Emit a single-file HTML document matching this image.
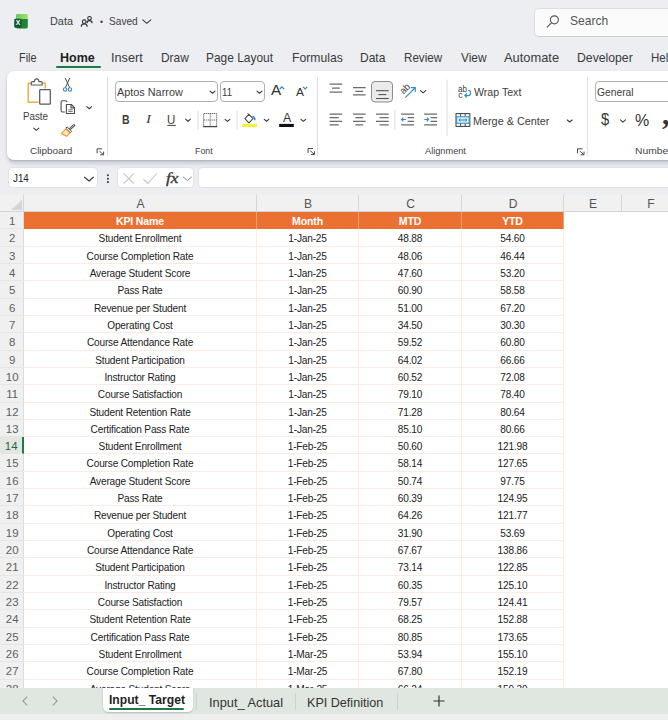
<!DOCTYPE html>
<html><head><meta charset="utf-8"><title>Data - Excel</title>
<style>
*{box-sizing:border-box;margin:0;padding:0}
html,body{width:668px;height:720px;overflow:hidden;background:#eceef2;font-family:"Liberation Sans",sans-serif;color:#242424}
.abs{position:absolute}
#app{position:relative;width:668px;height:720px;overflow:hidden;background:#eceef2}
/* title */
#title .t{position:absolute;top:14px;font-size:11.2px;color:#404040;line-height:16px;white-space:nowrap}
#search{position:absolute;left:533.5px;top:7.5px;width:145px;height:29px;background:#fbfbfc;border:1px solid #dcdee3;border-bottom-color:#c9ccd3;border-radius:5px}
#search span{position:absolute;left:36px;top:5px;font-size:12.2px;color:#555;line-height:16px}
/* tabs */
#tabs span{position:absolute;top:50px;font-size:12.2px;line-height:16px;color:#3a3a3a;white-space:nowrap}
#tabs .home{font-weight:bold;color:#1f1f1f}
#tabs u{position:absolute;left:56px;top:66px;width:45px;height:2px;background:#1c7a45;border-radius:1px}
/* ribbon */
#ribbon{position:absolute;left:7px;top:71.3px;width:680px;height:88.7px;background:#fff;border-radius:7px;box-shadow:0 1px 2px rgba(0,0,0,.12),0 3px 5px rgba(40,50,80,.13)}
#ribbon .lbl{position:absolute;top:73px;font-size:9.3px;line-height:12px;color:#444;white-space:nowrap}
#ribbon .sep{position:absolute;top:8px;width:1px;height:68px;background:#e1e1e1}
#ribbon .txt{position:absolute;font-size:10.9px;line-height:14px;color:#3d3d3d;white-space:nowrap}
.combo{position:absolute;height:21px;border:1px solid #b0b0b0;border-radius:4px;background:#fff}
/* formula bar */
#fbar .box{position:absolute;top:167.4px;height:20.8px;background:#fff;border-radius:4px;border:1px solid #e1e2e6}
/* grid */
#grid{position:absolute;left:0;top:195px;width:668px;height:493px;background:#fff;overflow:hidden}
#colhdr{position:absolute;left:0;top:0;width:668px;height:17px;background:#f1f1f1;border-bottom:1px solid #d4d4d4}
#colhdr span{position:absolute;top:0;height:17px;font-size:13px;line-height:17.6px;text-align:center;color:#555;transform:scaleX(.93)}
#colhdr i{position:absolute;top:0;width:1px;height:17px;background:#d6d6d6}
#rowhdr{position:absolute;left:0;top:17px;width:24px;height:480px;background:#f0f0f0;border-right:1px solid #dcdcdc}
.r{position:absolute;left:0;width:668px;height:17.32px}
.r i{position:absolute;left:0;top:0;width:24px;height:100%;font-style:normal;font-size:11.4px;line-height:19.2px;text-align:center;color:#606060;padding-left:.4px;border-bottom:1px solid #e6e6e6}
.r b{position:absolute;top:0;height:100%;font-weight:normal;font-size:10.1px;line-height:19.4px;text-align:center;color:#222;border-right:1px solid #fbebe1;border-bottom:1px solid #fbebe1;white-space:nowrap;letter-spacing:-0.17px}
.r .a{left:24px;width:233px}
.r .b{left:257px;width:102px}
.r .c{left:359px;width:103px}
.r .d{left:462px;width:102px}
.r.hd b{background:#ea7132;color:#fff;font-weight:bold;border-right:1px solid #f3a070;border-bottom:none;font-size:10.6px;line-height:18.4px}
.r.sel i{color:#1c6b3e;background:#e3e7e4;border-right:2px solid #1c7a45}
/* sheet tabs */
#sheets{position:absolute;left:0;top:687.7px;width:668px;height:26.2px;background:#e0e7e1}
#bottom{position:absolute;left:0;top:713.9px;width:668px;height:7px;background:#eeeeee}
#sheets span{position:absolute;font-size:12.6px;line-height:16px;color:#333;white-space:nowrap}
</style></head><body>
<div id="app">
<div id="title">
<svg class="abs" style="left:12px;top:12px" width="20" height="20" viewBox="12 12 20 20"><defs><linearGradient id="xg" x1="0" x2="1" y1="0" y2="0"><stop offset="0" stop-color="#62c95c"/><stop offset="1" stop-color="#a6e06c"/></linearGradient></defs><path d="M16 15.500c0-.8.600-1.400 1.400-1.400h9c.8 0 1.400.6 1.400 1.400V19.500H16z" fill="url(#xg)"/><path d="M16 19h11.800v8c0 .8-.6 1.400-1.400 1.400h-9c-.8 0-1.400-.6-1.400-1.400z" fill="#23813b"/><rect x="14.200" y="18.800" width="7.400" height="9" rx="1.300" fill="#0e5a2c"/><text x="17.900" y="25.300" font-size="6.800" font-weight="bold" fill="#fff" text-anchor="middle" font-family="Liberation Sans, sans-serif">X</text></svg>
<span class="t" id="t1" style="transform-origin:0 0;transform:scaleX(0.972);margin-left:-1.0px;margin-top:-0.6px;left:51px">Data</span>
<span class="t" id="t2" style="transform-origin:0 0;transform:scaleX(0.981);margin-left:1.1px;margin-top:-0.2px;left:99px;font-size:8.600px">•</span><span class="t" id="t3" style="transform-origin:0 0;transform:scaleX(0.906);margin-left:1.0px;margin-top:-0.6px;left:108px">Saved</span>
<div id="search"><span id="t4" style="transform-origin:0 0;transform:scaleX(0.989);margin-left:-0.5px;margin-top:-0.9px;">Search</span></div>
</div>
<div id="tabs">
<span id="t5" style="transform-origin:0 0;transform:scaleX(0.898);margin-left:-0.3px;margin-top:0.1px;left:19px">File</span><span class="home" id="t6" style="transform-origin:0 0;transform:scaleX(1.026);margin-left:0.2px;margin-top:0.1px;left:60px">Home</span><span id="t7" style="transform-origin:0 0;transform:scaleX(1.039);margin-left:-0.2px;margin-top:0.1px;left:111px">Insert</span><span id="t8" style="transform-origin:0 0;transform:scaleX(0.978);margin-left:0.6px;margin-top:0.1px;left:160px">Draw</span><span id="t9" style="transform-origin:0 0;transform:scaleX(0.979);margin-left:-0.6px;margin-top:0.1px;left:207px">Page Layout</span><span id="t10" style="transform-origin:0 0;transform:scaleX(0.999);margin-left:0.0px;margin-top:0.1px;left:292px">Formulas</span><span id="t11" style="transform-origin:0 0;transform:scaleX(0.984);margin-left:-0.2px;margin-top:0.1px;left:360px">Data</span><span id="t12" style="transform-origin:0 0;transform:scaleX(0.953);margin-left:-0.1px;margin-top:0.1px;left:404px">Review</span><span id="t13" style="transform-origin:0 0;transform:scaleX(0.975);margin-left:1.2px;margin-top:0.1px;left:460px">View</span><span id="t14" style="transform-origin:0 0;transform:scaleX(1.056);margin-left:0.1px;margin-top:0.1px;left:504px">Automate</span><span id="t15" style="transform-origin:0 0;transform:scaleX(1.003);margin-left:-0.4px;margin-top:0.1px;left:577px">Developer</span><span id="t16" style="transform-origin:0 0;transform:scaleX(0.944);margin-left:1.0px;margin-top:0.1px;left:650px">Help</span>
<u></u>
</div>
<div id="rshadow" style="position:absolute;left:9px;top:158px;width:670px;height:9px;background:linear-gradient(#d3d6dd,#e2e4e9 50%,#eceef2);border-radius:0 0 0 8px"></div>
<div id="ribbon">
<div id="rin" style="position:absolute;left:0;top:.7px">
<span class="txt" id="t17" style="transform-origin:0 0;transform:scaleX(0.898);margin-left:-1.1px;margin-top:0.0px;left:17.500px;top:37px">Paste</span>
<span class="lbl" id="t18" style="transform-origin:0 0;transform:scaleX(1.063);margin-left:0.0px;margin-top:0.1px;left:23px">Clipboard</span>
<div class="combo" style="left:108px;top:9.500px;width:102.500px"></div><span class="txt" id="t19" style="transform-origin:0 0;transform:scaleX(0.997);margin-left:-0.0px;margin-top:0.0px;left:110px;top:13px">Aptos Narrow</span>
<div class="combo" style="left:213px;top:9.500px;width:45px"></div><span class="txt" id="t20" style="transform-origin:0 0;transform:scaleX(0.889);margin-left:-1.0px;margin-top:0.0px;left:216px;top:13px">11</span>
<span class="txt" id="t21" style="transform-origin:0 0;transform:scaleX(1.051);margin-left:1.2px;margin-top:-0.8px;left:263px;top:10px;font-size:14.500px;line-height:18px;color:#333">A</span>
<span class="txt" id="t22" style="transform-origin:0 0;transform:scaleX(1.069);margin-left:1.7px;margin-top:-0.3px;left:287px;top:12px;font-size:11.200px;line-height:16px;color:#333">A</span>
<span class="txt" id="t23" style="transform-origin:0 0;transform:scaleX(0.876);margin-left:0.7px;margin-top:1.0px;left:114px;top:40px;font-weight:bold;font-size:12px">B</span>
<span class="txt" id="t24" style="transform-origin:0 0;transform:scaleX(1.104);margin-left:0.6px;margin-top:0.2px;left:138.300px;top:40px;font-style:italic;font-size:13.500px;font-family:'Liberation Serif',serif">I</span>
<span class="txt" id="t25" style="transform-origin:0 0;transform:scaleX(0.957);margin-left:0.4px;margin-top:1.3px;left:159.500px;top:40px;font-size:12px">U</span>
<span class="txt" id="t26" style="transform-origin:0 0;transform:scaleX(1.021);margin-left:1.6px;margin-top:2.4px;left:274px;top:36px;font-size:12px;line-height:16px;color:#333">A</span>
<span class="lbl" id="t27" style="transform-origin:0 0;transform:scaleX(0.947);margin-left:-1.0px;margin-top:-0.4px;left:188.500px">Font</span>
<span class="txt" id="t28" style="transform-origin:0 0;transform:scaleX(0.974);margin-left:-0.5px;margin-top:0.0px;left:467.500px;top:13px">Wrap Text</span>
<span class="txt" id="t29" style="transform-origin:0 0;transform:scaleX(0.993);margin-left:-1.3px;margin-top:-0.3px;left:467.500px;top:42px">Merge &amp; Center</span>
<span class="lbl" id="t30" style="transform-origin:0 0;transform:scaleX(0.990);margin-left:0.5px;margin-top:0.2px;left:417px">Alignment</span>
<div class="combo" style="left:588px;top:9.500px;width:100px"></div><span class="txt" id="t31" style="transform-origin:0 0;transform:scaleX(0.945);margin-left:0.2px;margin-top:0.3px;left:590px;top:13px">General</span>
<span class="txt" id="t32" style="transform-origin:0 0;transform:scaleX(0.921);margin-left:0.3px;margin-top:0.0px;left:594px;top:38px;font-size:16px;line-height:20px;color:#333">$</span>
<span class="txt" id="t33" style="transform-origin:0 0;transform:scaleX(1.001);margin-left:0.4px;margin-top:1.4px;left:628px;top:38px;font-size:16px;line-height:20px;color:#333">%</span>
<span class="txt" style="left:655px;top:30px;font-size:30px;line-height:24px;color:#333;font-weight:bold;font-family:'Liberation Serif',serif">,</span>
<span class="lbl" id="t34" style="transform-origin:0 0;transform:scaleX(1.112);margin-left:-0.2px;margin-top:0.1px;left:628px">Number</span>
</div>

</div>
<div id="fbar">
<div class="box" style="left:7.500px;width:90.200px"></div>
<span class="abs" id="t35" style="transform-origin:0 0;transform:scaleX(0.907);margin-left:0.1px;margin-top:0.1px;left:13px;top:171px;font-size:10.800px;line-height:15px;color:#222">J14</span>
<div class="box" style="left:116.900px;width:76.800px"></div>
<span class="abs" id="t36" style="transform-origin:0 0;transform:scaleX(1.190);margin-left:0.8px;margin-top:0.4px;left:165px;top:169px;font-size:14.500px;line-height:18px;color:#333;font-style:italic;-webkit-text-stroke:.3px #333;font-family:'Liberation Serif',serif">fx</span>
<div class="box" style="left:197.800px;width:480px"></div>

</div>
<div id="grid">
<div id="colhdr"><span style="left:24px;width:233px">A</span><span style="left:257px;width:102px">B</span><span style="left:359px;width:103px">C</span><span style="left:462px;width:102px">D</span><span style="left:564px;width:58px">E</span><span style="left:622px;width:58px">F</span>
<i style="left:23px"></i><i style="left:256px"></i><i style="left:358px"></i><i style="left:461px"></i><i style="left:563px"></i><i style="left:621px"></i>
<svg class="abs" style="left:11px;top:5px" width="11" height="10" viewBox="0 0 11 10"><path d="M11 0V10H0Z" fill="#d5d5d5"/></svg></div>
<div id="rowhdr"></div>
<div id="rows">
<div style="top:17.00px" class="r hd"><i>1</i><b class="a">KPI Name</b><b class="b">Month</b><b class="c">MTD</b><b class="d">YTD</b></div>
<div style="top:34.32px" class="r"><i>2</i><b class="a">Student Enrollment</b><b class="b">1-Jan-25</b><b class="c">48.88</b><b class="d">54.60</b></div>
<div style="top:51.64px" class="r"><i>3</i><b class="a">Course Completion Rate</b><b class="b">1-Jan-25</b><b class="c">48.06</b><b class="d">46.44</b></div>
<div style="top:68.96px" class="r"><i>4</i><b class="a">Average Student Score</b><b class="b">1-Jan-25</b><b class="c">47.60</b><b class="d">53.20</b></div>
<div style="top:86.28px" class="r"><i>5</i><b class="a">Pass Rate</b><b class="b">1-Jan-25</b><b class="c">60.90</b><b class="d">58.58</b></div>
<div style="top:103.60px" class="r"><i>6</i><b class="a">Revenue per Student</b><b class="b">1-Jan-25</b><b class="c">51.00</b><b class="d">67.20</b></div>
<div style="top:120.92px" class="r"><i>7</i><b class="a">Operating Cost</b><b class="b">1-Jan-25</b><b class="c">34.50</b><b class="d">30.30</b></div>
<div style="top:138.24px" class="r"><i>8</i><b class="a">Course Attendance Rate</b><b class="b">1-Jan-25</b><b class="c">59.52</b><b class="d">60.80</b></div>
<div style="top:155.56px" class="r"><i>9</i><b class="a">Student Participation</b><b class="b">1-Jan-25</b><b class="c">64.02</b><b class="d">66.66</b></div>
<div style="top:172.88px" class="r"><i>10</i><b class="a">Instructor Rating</b><b class="b">1-Jan-25</b><b class="c">60.52</b><b class="d">72.08</b></div>
<div style="top:190.20px" class="r"><i>11</i><b class="a">Course Satisfaction</b><b class="b">1-Jan-25</b><b class="c">79.10</b><b class="d">78.40</b></div>
<div style="top:207.52px" class="r"><i>12</i><b class="a">Student Retention Rate</b><b class="b">1-Jan-25</b><b class="c">71.28</b><b class="d">80.64</b></div>
<div style="top:224.84px" class="r"><i>13</i><b class="a">Certification Pass Rate</b><b class="b">1-Jan-25</b><b class="c">85.10</b><b class="d">80.66</b></div>
<div style="top:242.16px" class="r sel"><i>14</i><b class="a">Student Enrollment</b><b class="b">1-Feb-25</b><b class="c">50.60</b><b class="d">121.98</b></div>
<div style="top:259.48px" class="r"><i>15</i><b class="a">Course Completion Rate</b><b class="b">1-Feb-25</b><b class="c">58.14</b><b class="d">127.65</b></div>
<div style="top:276.80px" class="r"><i>16</i><b class="a">Average Student Score</b><b class="b">1-Feb-25</b><b class="c">50.74</b><b class="d">97.75</b></div>
<div style="top:294.12px" class="r"><i>17</i><b class="a">Pass Rate</b><b class="b">1-Feb-25</b><b class="c">60.39</b><b class="d">124.95</b></div>
<div style="top:311.44px" class="r"><i>18</i><b class="a">Revenue per Student</b><b class="b">1-Feb-25</b><b class="c">64.26</b><b class="d">121.77</b></div>
<div style="top:328.76px" class="r"><i>19</i><b class="a">Operating Cost</b><b class="b">1-Feb-25</b><b class="c">31.90</b><b class="d">53.69</b></div>
<div style="top:346.08px" class="r"><i>20</i><b class="a">Course Attendance Rate</b><b class="b">1-Feb-25</b><b class="c">67.67</b><b class="d">138.86</b></div>
<div style="top:363.40px" class="r"><i>21</i><b class="a">Student Participation</b><b class="b">1-Feb-25</b><b class="c">73.14</b><b class="d">122.85</b></div>
<div style="top:380.72px" class="r"><i>22</i><b class="a">Instructor Rating</b><b class="b">1-Feb-25</b><b class="c">60.35</b><b class="d">125.10</b></div>
<div style="top:398.04px" class="r"><i>23</i><b class="a">Course Satisfaction</b><b class="b">1-Feb-25</b><b class="c">79.57</b><b class="d">124.41</b></div>
<div style="top:415.36px" class="r"><i>24</i><b class="a">Student Retention Rate</b><b class="b">1-Feb-25</b><b class="c">68.25</b><b class="d">152.88</b></div>
<div style="top:432.68px" class="r"><i>25</i><b class="a">Certification Pass Rate</b><b class="b">1-Feb-25</b><b class="c">80.85</b><b class="d">173.65</b></div>
<div style="top:450.00px" class="r"><i>26</i><b class="a">Student Enrollment</b><b class="b">1-Mar-25</b><b class="c">53.94</b><b class="d">155.10</b></div>
<div style="top:467.32px" class="r"><i>27</i><b class="a">Course Completion Rate</b><b class="b">1-Mar-25</b><b class="c">67.80</b><b class="d">152.19</b></div>
<div style="top:484.64px" class="r"><i>28</i><b class="a">Average Student Score</b><b class="b">1-Mar-25</b><b class="c">66.24</b><b class="d">159.30</b></div>
</div>
</div>
<div id="sheets">
<svg class="abs" style="left:22px;top:8px" width="6" height="10" viewBox="0 0 6 10" fill="none" stroke="#9a9a9a" stroke-width="1.100"><path d="M5.200.7L.9 5l4.300 4.300"/></svg>
<svg class="abs" style="left:52px;top:8px" width="6" height="10" viewBox="0 0 6 10" fill="none" stroke="#9a9a9a" stroke-width="1.100"><path d="M.8.700L5.100 5 .8 9.300"/></svg>
<div class="abs" style="left:102.500px;top:0;width:90px;height:24.200px;background:#fff;border-radius:0 0 5px 5px;box-shadow:0 1px 2px rgba(0,0,0,.2)"></div>
<span id="t37" style="transform-origin:0 0;transform:scaleX(0.964);margin-left:-0.3px;margin-top:1.0px;left:109px;top:3.500px;font-weight:bold;color:#1f1f1f">Input_ Target</span>
<i class="abs" style="left:109px;top:20.300px;width:75.400px;height:2.200px;background:#1c7a45;border-radius:1px"></i>
<i class="abs" style="left:196px;top:5px;width:1px;height:17px;background:#ccd3cd"></i>
<span id="t38" style="transform-origin:0 0;transform:scaleX(1.017);margin-left:-0.3px;margin-top:1.0px;left:209px;top:6px">Input_ Actual</span>
<i class="abs" style="left:295px;top:5px;width:1px;height:17px;background:#ccd3cd"></i>
<span id="t39" style="transform-origin:0 0;transform:scaleX(0.999);margin-left:-0.5px;margin-top:1.0px;left:307.500px;top:6px">KPI Definition</span>
<i class="abs" style="left:396.500px;top:5px;width:1px;height:17px;background:#ccd3cd"></i>
<svg class="abs" style="left:433px;top:7px" width="12" height="12" viewBox="0 0 12 12" stroke="#333" stroke-width="1.200"><path d="M6 .5v11M.5 6h11"/></svg>

</div>
<div id="bottom"></div>
<svg class="abs" style="left:0;top:0;z-index:3" width="668" height="720" viewBox="0 0 668 720">
<g fill="none" stroke="#333" stroke-width="1.150"><circle cx="89.500" cy="18.300" r="1.800"/><path d="M87 23.200c0-1.700 1.100-2.600 2.500-2.600s2.600.9 2.600 2.600"/><circle cx="84.200" cy="21.700" r="1.800"/><path d="M81.200 26.800c0-2 1.300-3 3-3s3 1 3 3"/></g>
<path d="M142.80 19.90l4.00 3.40l4.00 -3.40" stroke="#3a3a3a" stroke-width="1.1" fill="none" stroke-linecap="round" stroke-linejoin="round"/>
<g fill="none" stroke="#555" stroke-width="1.150"><circle cx="554.400" cy="19.800" r="4"/><path d="M551.500 22.800L546.800 27.400"/></g>
<g fill="none" stroke-linejoin="round"><path d="M31 83.300H28.200V102.200H38.600M42.500 83.300H45.300V88.400" stroke="#eeae4c" stroke-width="1.450"/><path d="M31.300 85V82.600c0-.6.400-1 1-1h2.200c.1-1.600 1-2.700 2.200-2.700s2.100 1.100 2.200 2.700h2.200c.6 0 1 .4 1 1V85z" stroke="#5a5a5a" stroke-width="1.150" fill="#fff"/><rect x="39.700" y="89.600" width="10.600" height="14.600" rx=".8" fill="#fff" stroke="#5a5a5a" stroke-width="1.250"/></g>
<path d="M33.70 128.09l2.60 2.21l2.60 -2.21" stroke="#3a3a3a" stroke-width="1.1" fill="none" stroke-linecap="round" stroke-linejoin="round"/>
<g fill="none"><path d="M65.200 78L69.600 87.600M69.800 78L65.400 87.600" stroke="#4a4a4a" stroke-width="1"/><circle cx="65.100" cy="89.500" r="1.700" stroke="#3b86c6" stroke-width="1.100"/><circle cx="69.900" cy="89.500" r="1.700" stroke="#3b86c6" stroke-width="1.100"/></g>
<g fill="none" stroke="#4d4d4d" stroke-width="1.100" stroke-linejoin="round"><path d="M64.800 112H62.300c-.7 0-1.200-.5-1.200-1.200V102c0-.7.500-1.200 1.200-1.200H66l1.200 1.100"/><path d="M66.400 104.500h4.900l3.200 3.200v5.800h-8.100z" fill="#fff"/><path d="M71 104.700v3.200h3.300"/><path d="M68.200 109.800h4.500M68.200 111.600h4.500" stroke-width=".8"/></g>
<path d="M86.80 106.68l2.40 2.04l2.40 -2.04" stroke="#3a3a3a" stroke-width="1.1" fill="none" stroke-linecap="round" stroke-linejoin="round"/>
<g fill="none" stroke-linejoin="round" stroke-linecap="round"><path d="M74 125.300l-3.600 3.400" stroke="#4a4a4a" stroke-width="2.400"/><path d="M74 125.300l-3.400 3.200" stroke="#fff" stroke-width=".7"/><path d="M67.400 127.200l4.300 4.200-1.300 1.300-4.300-4.200z" stroke="#4a4a4a" stroke-width="1" fill="#fff"/><path d="M65.700 128.900l4.200 4.200-3.200 3.200-5.300-2.700z" stroke="#e9a23b" stroke-width="1.200" fill="#fbe6c2"/></g>
<g transform="translate(96.6,148.3)" stroke="#4a4a4a" stroke-width="1" fill="none"><path d="M.5 5V.5H5.500"/><path d="M2.800 2.800L6.800 6.300M7 3.300V6.500H3.600"/></g>
<path d="M107.5 77V156" stroke="#dedede" stroke-width="1"/>
<path d="M210.00 91.14l2.50 2.12l2.50 -2.12" stroke="#3a3a3a" stroke-width="1.1" fill="none" stroke-linecap="round" stroke-linejoin="round"/>
<path d="M257.00 91.14l2.50 2.12l2.50 -2.12" stroke="#3a3a3a" stroke-width="1.1" fill="none" stroke-linecap="round" stroke-linejoin="round"/>
<path d="M279.800 89l2.100-2.200 2.100 2.200" stroke="#3b86c6" stroke-width="1.200" fill="none"/>
<path d="M303 86.800l2.100 2.200 2.100-2.200" stroke="#3b86c6" stroke-width="1.200" fill="none"/>
<path d="M167.300 125.400H175.800" stroke="#444" stroke-width="1"/>
<path d="M185.60 119.18l2.40 2.04l2.40 -2.04" stroke="#3a3a3a" stroke-width="1.1" fill="none" stroke-linecap="round" stroke-linejoin="round"/>
<path d="M198 111V129.5" stroke="#dedede" stroke-width="1"/>
<g fill="none"><rect x="203.700" y="113.500" width="13" height="13" stroke="#555" stroke-width="1" stroke-dasharray="1.200 .8"/><path d="M210.200 113.500v13M203.700 120h13" stroke="#666" stroke-width="1" stroke-dasharray="1.200 .8"/><path d="M203.200 126.600h14" stroke="#444" stroke-width="1.300"/></g>
<path d="M225.10 119.38l2.40 2.04l2.40 -2.04" stroke="#3a3a3a" stroke-width="1.1" fill="none" stroke-linecap="round" stroke-linejoin="round"/>
<path d="M237 111V129.5" stroke="#dedede" stroke-width="1"/>
<g fill="none" stroke-linejoin="round"><path d="M248.800 114.400l4.300 4.300-4.100 4.100-4.100-4.100z" stroke="#4a4a4a" stroke-width="1.100" fill="#fff"/><path d="M247.600 113.200l1.600 1.600" stroke="#4a4a4a" stroke-width="1"/><path d="M252.400 116c1.800.6 2.700 2 2.500 4.200" stroke="#2f7fc1" stroke-width="1.300"/><rect x="242.300" y="123.900" width="14.800" height="3.100" fill="#f8ee3a" stroke="none"/></g>
<path d="M264.30 119.34l2.25 1.91l2.25 -1.91" stroke="#3a3a3a" stroke-width="1.1" fill="none" stroke-linecap="round" stroke-linejoin="round"/>
<rect x="279.200" y="123.900" width="14.600" height="3.100" fill="#111"/>
<path d="M301.00 119.30l2.35 2.00l2.35 -2.00" stroke="#3a3a3a" stroke-width="1.1" fill="none" stroke-linecap="round" stroke-linejoin="round"/>
<g transform="translate(307.5,148)" stroke="#4a4a4a" stroke-width="1" fill="none"><path d="M.5 5V.5H5.500"/><path d="M2.800 2.800L6.800 6.300M7 3.300V6.500H3.600"/></g>
<path d="M317.5 77V156" stroke="#dedede" stroke-width="1"/>
<path d="M329.60 84.10H342.20" stroke="#4d4d4d" stroke-width="1.05"/>
<path d="M331.99 88.10H339.81" stroke="#4d4d4d" stroke-width="1.05"/>
<path d="M329.60 92.10H342.20" stroke="#4d4d4d" stroke-width="1.05"/>
<path d="M353.00 87.70H365.60" stroke="#4d4d4d" stroke-width="1.05"/>
<path d="M355.39 91.30H363.21" stroke="#4d4d4d" stroke-width="1.05"/>
<path d="M353.00 94.90H365.60" stroke="#4d4d4d" stroke-width="1.05"/>
<rect x="371.500" y="81.500" width="21" height="20.500" rx="3.500" fill="#ebebeb" stroke="#8d8d8d" stroke-width="1"/>
<path d="M376.00 90.70H388.70" stroke="#4d4d4d" stroke-width="1.05"/>
<path d="M378.41 94.60H386.29" stroke="#4d4d4d" stroke-width="1.05"/>
<path d="M376.00 98.50H388.70" stroke="#4d4d4d" stroke-width="1.05"/>
<text transform="translate(403.400,94.600) rotate(-45)" font-size="9.400" fill="#3a3a3a" font-family="Liberation Sans, sans-serif">ab</text>
<path d="M405.200 97.600L415 88M410.800 87.600H415.300V92" stroke="#2f8fc4" stroke-width="1.100" fill="none"/>
<path d="M420.50 90.59l2.60 2.21l2.60 -2.21" stroke="#3a3a3a" stroke-width="1.1" fill="none" stroke-linecap="round" stroke-linejoin="round"/>
<path d="M329.60 114.10H342.20" stroke="#4d4d4d" stroke-width="1.05"/>
<path d="M329.60 117.70H338.67" stroke="#4d4d4d" stroke-width="1.05"/>
<path d="M329.60 121.30H342.20" stroke="#4d4d4d" stroke-width="1.05"/>
<path d="M329.60 124.90H338.67" stroke="#4d4d4d" stroke-width="1.05"/>
<path d="M353.00 114.10H365.60" stroke="#4d4d4d" stroke-width="1.05"/>
<path d="M355.39 117.70H363.21" stroke="#4d4d4d" stroke-width="1.05"/>
<path d="M353.00 121.30H365.60" stroke="#4d4d4d" stroke-width="1.05"/>
<path d="M355.39 124.90H363.21" stroke="#4d4d4d" stroke-width="1.05"/>
<path d="M376.00 114.10H388.70" stroke="#4d4d4d" stroke-width="1.05"/>
<path d="M379.56 117.70H388.70" stroke="#4d4d4d" stroke-width="1.05"/>
<path d="M376.00 121.30H388.70" stroke="#4d4d4d" stroke-width="1.05"/>
<path d="M379.56 124.90H388.70" stroke="#4d4d4d" stroke-width="1.05"/>
<path d="M394.8 109.5V130" stroke="#dedede" stroke-width="1"/>
<path d="M401.10 114.10H414.10" stroke="#4d4d4d" stroke-width="1.05"/>
<path d="M407.60 117.70H414.10" stroke="#4d4d4d" stroke-width="1.05"/>
<path d="M407.60 121.30H414.10" stroke="#4d4d4d" stroke-width="1.05"/>
<path d="M401.10 124.90H414.10" stroke="#4d4d4d" stroke-width="1.05"/>
<path d="M405.90 119.50H401.60M403.40 117.60l-1.900 1.900 1.900 1.900" stroke="#2f8fc4" stroke-width="1.100" fill="none"/>
<path d="M424.10 114.10H437.10" stroke="#4d4d4d" stroke-width="1.05"/>
<path d="M430.60 117.70H437.10" stroke="#4d4d4d" stroke-width="1.05"/>
<path d="M430.60 121.30H437.10" stroke="#4d4d4d" stroke-width="1.05"/>
<path d="M424.10 124.90H437.10" stroke="#4d4d4d" stroke-width="1.05"/>
<path d="M424.30 119.50H428.60M426.80 117.60l1.900 1.900-1.900 1.900" stroke="#2f8fc4" stroke-width="1.100" fill="none"/>
<path d="M447 79.5V136" stroke="#dedede" stroke-width="1"/>
<text x="458" y="91.700" font-size="8.600" fill="#3a3a3a" font-family="Liberation Sans, sans-serif" textLength="9" lengthAdjust="spacingAndGlyphs">ab</text>
<text x="458.200" y="98.300" font-size="8.600" fill="#3a3a3a" font-family="Liberation Sans, sans-serif">c</text>
<path d="M468 90.200c3.400 0 3.400 5.400 0 5.400H465M466.900 93.500L464.800 95.600l2.100 2.100" stroke="#2f8fc4" stroke-width="1.100" fill="none"/>
<g fill="none"><rect x="456" y="113.600" width="13.800" height="12.800" stroke="#4a4a4a" stroke-width="1.100"/><path d="M460.600 113.800v2.800M465.200 113.800v2.800M460.600 123.400v2.800M465.200 123.400v2.800" stroke="#4a4a4a" stroke-width="1"/><rect x="456.600" y="116.700" width="12.600" height="6.600" fill="#d5e8f6" stroke="#2f8fc4" stroke-width="1"/><path d="M459 120h7.800M460.400 118.600L459 120l1.400 1.400M465.400 118.600l1.400 1.400-1.400 1.400" stroke="#2f8fc4" stroke-width="1"/></g>
<path d="M567.30 119.98l2.40 2.04l2.40 -2.04" stroke="#3a3a3a" stroke-width="1.1" fill="none" stroke-linecap="round" stroke-linejoin="round"/>
<g transform="translate(577,148.3)" stroke="#4a4a4a" stroke-width="1" fill="none"><path d="M.5 5V.5H5.500"/><path d="M2.800 2.800L6.800 6.300M7 3.300V6.500H3.600"/></g>
<path d="M587.4 77V156" stroke="#dedede" stroke-width="1"/>
<path d="M620.40 119.94l2.50 2.12l2.50 -2.12" stroke="#3a3a3a" stroke-width="1.1" fill="none" stroke-linecap="round" stroke-linejoin="round"/>
<path d="M84.60 177.23l4.40 3.74l4.40 -3.74" stroke="#3a3a3a" stroke-width="1.15" fill="none" stroke-linecap="round" stroke-linejoin="round"/>
<g fill="#3a3a3a"><circle cx="107.900" cy="175.300" r="1.050"/><circle cx="107.900" cy="178.700" r="1.050"/><circle cx="107.900" cy="182.100" r="1.050"/></g>
<path d="M123.600 173.300l10.400 10.300M134 173.300l-10.400 10.300" stroke="#c4c4c4" stroke-width="1.100" fill="none"/>
<path d="M143.500 179.200l4.300 4.300 8.900-10" stroke="#c4c4c4" stroke-width="1.100" fill="none"/>
<path d="M183.30 177.06l4.10 3.48l4.10 -3.48" stroke="#8a8a8a" stroke-width="1" fill="none" stroke-linecap="round" stroke-linejoin="round"/>
</svg>

</div>
</body></html>
